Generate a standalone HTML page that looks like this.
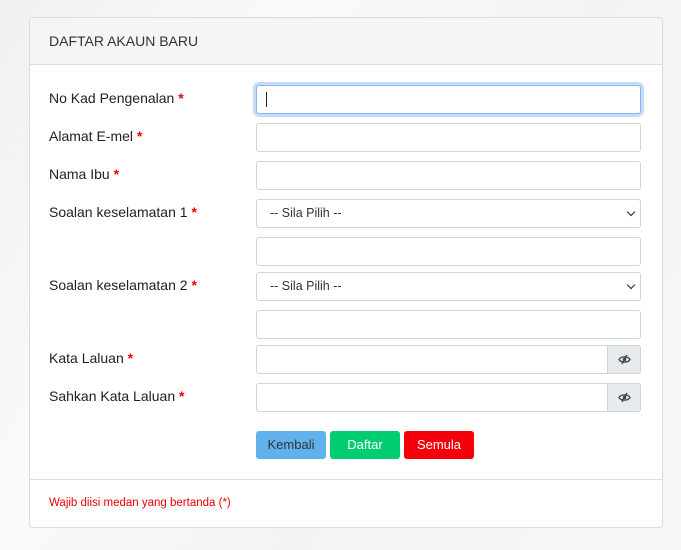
<!DOCTYPE html><html><head><style>
body{margin:0;width:681px;height:550px;background:linear-gradient(120deg,#f0f0f0 0%,#fafafa 30%,#f3f3f3 60%,#f7f7f7 100%);font-family:"Liberation Sans",sans-serif;position:relative;overflow:hidden;font-size:13px;color:#222}
.card{position:absolute;left:29px;top:17px;width:632px;height:509px;background:#fff;border:1px solid #dcdcdc;border-radius:4px;overflow:hidden}
.hd{height:46px;background:#f5f5f5;border-bottom:1px solid #ddd;padding:0 19px;line-height:47px;font-size:14px;color:#333}
.l{position:absolute;left:49px;font-size:14px;color:#222}
.l b{color:#e00;font-weight:bold}
.i{position:absolute;left:256px;width:383px;height:27px;border:1px solid #cfd4da;border-radius:3px;background:#fff}
.s{font-size:12.5px;color:#333;line-height:27px;padding-left:13px;box-sizing:border-box;width:385px;height:29px}
.s:after{content:"";position:absolute;right:6px;top:9px;width:5px;height:5px;border-right:1.6px solid #222;border-bottom:1.6px solid #222;transform:rotate(45deg)}
.eye{position:absolute;right:0;top:0;width:32px;height:27px;background:#e8ebee;border-left:1px solid #cfd4da}
.eye svg{position:absolute;left:10px;top:8px}
.b{position:absolute;top:431px;width:70px;height:28px;border-radius:3px;line-height:28px;text-align:center;font-size:13px}
</style></head><body>
<div class="card"><div class="hd">DAFTAR AKAUN BARU</div>
<div style="position:absolute;left:0;right:0;top:461px;border-top:1px solid #ddd"></div>
<div style="position:absolute;left:19px;top:479px;color:#e00;font-size:11.5px">Wajib diisi medan yang bertanda (*)</div>
</div>
<div class="l" style="top:90px">No Kad Pengenalan <b>*</b></div>
<div class="l" style="top:128px">Alamat E-mel <b>*</b></div>
<div class="l" style="top:166px">Nama Ibu <b>*</b></div>
<div class="l" style="top:204px">Soalan keselamatan 1 <b>*</b></div>
<div class="l" style="top:277px">Soalan keselamatan 2 <b>*</b></div>
<div class="l" style="top:350px">Kata Laluan <b>*</b></div>
<div class="l" style="top:388px">Sahkan Kata Laluan <b>*</b></div>
<div class="i" style="top:85px;border-color:#86b7fe;box-shadow:0 0 0 3px #c6dcf7"><div style="position:absolute;left:9px;top:6px;width:1px;height:15px;background:#222"></div></div>
<div class="i" style="top:123px"></div>
<div class="i" style="top:161px"></div>
<div class="i s" style="top:199px">-- Sila Pilih --</div>
<div class="i" style="top:237px"></div>
<div class="i s" style="top:272px">-- Sila Pilih --</div>
<div class="i" style="top:310px"></div>
<div class="i" style="top:345px"><div class="eye"><svg width="13" height="11" viewBox="0 0 13 11"><path d="M1 5.5C3 2 10 2 12 5.5C10 9 3 9 1 5.5Z" fill="none" stroke="#444" stroke-width="1.3"/><circle cx="6.5" cy="5.5" r="1.8" fill="#444"/><path d="M9 1L4 10" stroke="#444" stroke-width="1.4"/></svg></div></div>
<div class="i" style="top:383px"><div class="eye"><svg width="13" height="11" viewBox="0 0 13 11"><path d="M1 5.5C3 2 10 2 12 5.5C10 9 3 9 1 5.5Z" fill="none" stroke="#444" stroke-width="1.3"/><circle cx="6.5" cy="5.5" r="1.8" fill="#444"/><path d="M9 1L4 10" stroke="#444" stroke-width="1.4"/></svg></div></div>
<div class="b" style="left:256px;background:#61b1ec;color:#333">Kembali</div>
<div class="b" style="left:330px;background:#00cc70;color:#fff">Daftar</div>
<div class="b" style="left:404px;background:#f4000b;color:#fff">Semula</div>
</body></html>
